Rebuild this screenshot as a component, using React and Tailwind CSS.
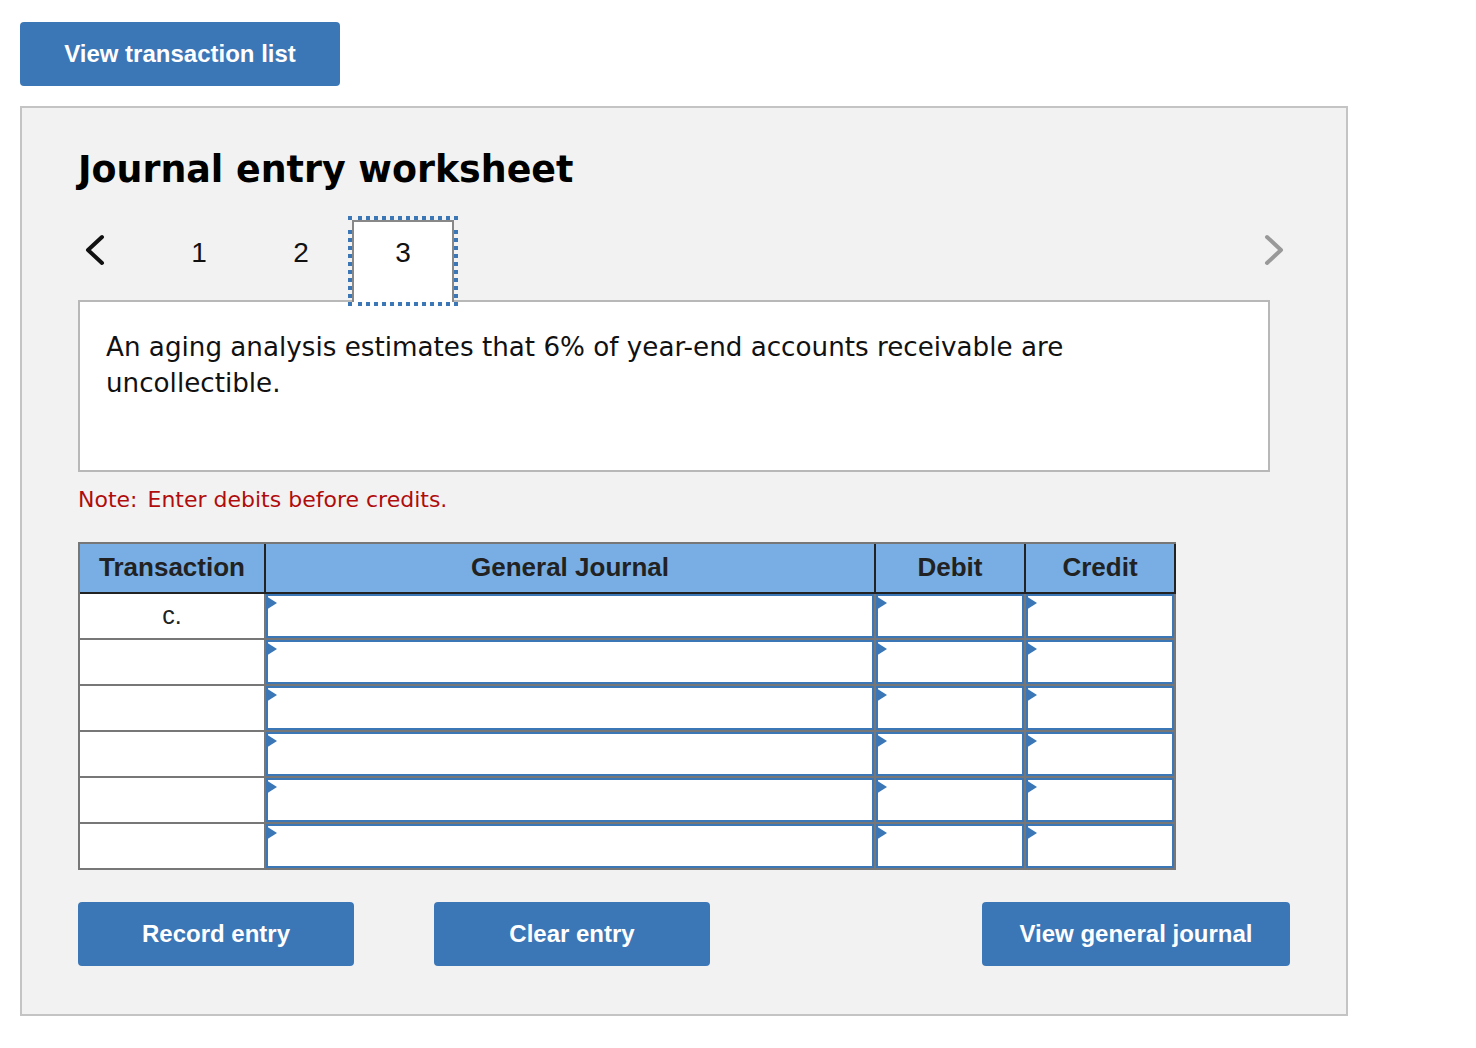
import React from "react";

const sans = "font-['Liberation_Sans',Arial,sans-serif]";
const verdana = "font-['DejaVu_Sans',Verdana,sans-serif]";
const btn = `flex h-16 items-center justify-center rounded bg-[#3b76b7] text-2xl font-bold text-white ${sans}`;
const dotsX = "absolute h-1 bg-[repeating-linear-gradient(90deg,#3b76b7_0_4px,transparent_4px_8px)]";
const dotsY = "absolute w-1 bg-[repeating-linear-gradient(180deg,#3b76b7_0_4px,transparent_4px_8px)]";

function Head({ children }) {
  return (
    <div className="flex h-[50px] items-center justify-center border-r-2 border-b-2 border-[#222] bg-[#78aee4] pb-0.5 text-[26px] font-bold text-[#222]">
      {children}
    </div>
  );
}

function Entry() {
  return (
    <div className="h-[46px] border-r-2 border-b-2 border-[#777]">
      <div className="relative h-full border-2 border-[#3b76b7] bg-white">
        <svg className="absolute top-0 -left-0.5" width="11" height="14" viewBox="0 0 11 14">
          <path d="M0 0 L11 7 L0 14 Z" fill="#3b76b7" />
        </svg>
      </div>
    </div>
  );
}

function Row({ label }) {
  return (
    <>
      <div className="flex h-[46px] items-center justify-center border-r-2 border-b-2 border-[#777] bg-white text-[25px] text-[#222]">
        {label}
      </div>
      <Entry />
      <Entry />
      <Entry />
    </>
  );
}

export default function App() {
  return (
    <div className="min-h-[1048px] bg-white pt-[22px] pl-5">
      <button className={`${btn} w-80`}>View transaction list</button>
      <section className="mt-5 h-[910px] w-[1328px] border-2 border-[#c4c4c4] bg-[#f2f2f2] pl-14">
        <h1 className={`pt-10 text-[36.4px] leading-[44px] font-bold text-black ${verdana}`}>Journal entry worksheet</h1>
        <div className={`mt-6 flex h-[84px] w-[1212px] items-start text-[28px] leading-none text-[#111] ${sans}`}>
          <svg className="mt-[17px] ml-1.5 shrink-0" width="22" height="34" viewBox="0 0 22 34" fill="none">
            <path d="M18 4 L4 17 L18 30" stroke="#111" strokeWidth="4" strokeLinecap="round" strokeLinejoin="round" />
          </svg>
          <div className="ml-[42px] flex h-[74px] w-[102px] shrink-0 items-center justify-center">1</div>
          <div className="flex h-[74px] w-[102px] shrink-0 items-center justify-center">2</div>
          <div className="relative z-10 mt-1 flex h-[82px] w-[102px] shrink-0 items-start justify-center border-2 border-b-0 border-[#888] bg-white pt-[17px]">
            3
            <span className="absolute -top-1.5 -left-1.5 h-1 w-1 bg-[#3b76b7]" />
            <span className={`${dotsX} -top-1.5 left-1 w-[100px]`} />
            <span className={`${dotsX} -bottom-1 left-1 w-[100px]`} />
            <span className={`${dotsY} top-2 -left-1.5 h-[76px]`} />
            <span className={`${dotsY} top-2 -right-1.5 h-[76px]`} />
          </div>
          <svg className="mt-[17px] ml-[809px] shrink-0" width="22" height="34" viewBox="0 0 22 34" fill="none">
            <path d="M4 4 L18 17 L4 30" stroke="#999" strokeWidth="4" strokeLinecap="round" strokeLinejoin="round" />
          </svg>
        </div>
        <div className={`h-[172px] w-[1192px] border-2 border-[#b8b8b8] bg-white px-[26px] pt-[27px] text-[26.2px] leading-9 text-[#111] ${verdana}`}>
          An aging analysis estimates that 6% of year-end accounts receivable are uncollectible.
        </div>
        <p className={`mt-3.5 text-[22px] leading-7 text-[#b00c0c] ${verdana}`}>
          <span className="mr-2.5">Note:</span>
          Enter debits before credits.
        </p>
        <div className={`mt-[28px] grid w-[1098px] grid-cols-[186px_610px_150px_150px] border-t-2 border-l-2 border-[#777] ${sans}`}>
          <Head>Transaction</Head>
          <Head>General Journal</Head>
          <Head>Debit</Head>
          <Head>Credit</Head>
          <Row label="c." />
          <Row />
          <Row />
          <Row />
          <Row />
          <Row />
        </div>
        <div className="mt-8 flex w-[1212px]">
          <button className={`${btn} w-[276px]`}>Record entry</button>
          <button className={`${btn} ml-20 w-[276px]`}>Clear entry</button>
          <button className={`${btn} ml-auto w-[308px]`}>View general journal</button>
        </div>
      </section>
    </div>
  );
}
